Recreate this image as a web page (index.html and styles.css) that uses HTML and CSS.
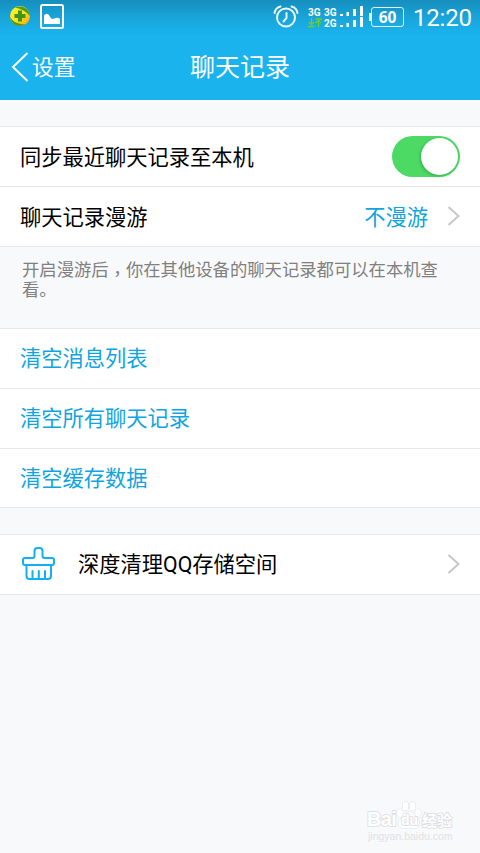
FILE: index.html
```html
<!DOCTYPE html>
<html lang="zh-CN">
<head>
<meta charset="utf-8">
<title>聊天记录</title>
<link rel="stylesheet" href="styles.css">
</head>
<body>
<header class="top">
  <div class="status">
    <svg class="app" width="22" height="22" viewBox="0 0 22 22">
      <defs><linearGradient id="gold" x1="0" y1="0" x2="1" y2="1"><stop offset="0" stop-color="#fff32a"/><stop offset=".5" stop-color="#ffe51d"/><stop offset="1" stop-color="#f79c08"/></linearGradient></defs>
      <circle cx="11" cy="11" r="10" fill="url(#gold)"/>
      <path d="M6 2.500C12 0 18 2 20.500 8l.3 3C17 6 12 4 6 2.500ZM1.200 12C4 17 9 19 16 19.500C10 23 2 20 1.200 12Z" fill="#4d9b20"/>
      <path d="M9 5.500h4V9h3.500v4H13v3.500H9V13H5.500V9H9z" fill="#439322"/>
    </svg>
    <svg class="photo" width="24" height="25" viewBox="0 0 24 25">
      <rect x="1" y="1" width="22" height="23" rx="1.500" fill="none" stroke="#fff" stroke-width="2"/>
      <path d="M4 20v-8.500C6 9 8 9.500 9.500 12c1.500 2.500 2.500 3.500 4.500 2.500 2-1 4-1.500 6 .5v5z" fill="#fff"/>
    </svg>
    <svg class="alarm" width="26" height="24" viewBox="0 0 26 24" fill="none" stroke="#eefaff" stroke-width="2" stroke-linecap="round">
      <circle cx="13" cy="12.500" r="9"/><path d="M13.500 8v5l-3 3.500M1.500 8C2 4.500 4 2.500 7.500 1.500M24.500 8C24 4.500 22 2.500 18.500 1.500"/>
    </svg>
    <div class="net">
      <span>3G</span><span>3G</span>
      <svg width="14" height="10" viewBox="0 0 14 10" fill="none" stroke="#69cd2a" stroke-width="1.300"><path d="M3.500 0v6.500M.8 4l2.700 2.700L6.200 4M0 8.500h6.500M10.500 9V2.500M7.800 5l2.700-2.700L13.200 5M7.300 1h6.500"/></svg><span>2G</span>
    </div>
    <svg class="signal" width="24" height="22" viewBox="0 0 24 22" fill="#fff">
      <path d="M0 8h3v2H0zM6.500 6h2.500v4H6.500zM13 3h3v7h-3zM20 0h3v10h-3zM0 19h3v2H0zM6.500 17h2.500v4H6.500zM13 14h3v7h-3zM20 11h3v10h-3z"/>
    </svg>
    <div class="battery">60</div>
    <div class="time">12:20</div>
  </div>
  <nav class="nav">
    <svg width="18" height="30" viewBox="0 0 18 30" fill="none" stroke="#fff" stroke-width="2"><path d="M16.500 1L2 15l14.500 14"/></svg>
    <span class="back">设置</span>
    <h1>聊天记录</h1>
  </nav>
</header>
<main>
  <section class="group">
    <div class="row"><span class="label">同步最近聊天记录至本机</span><span class="switch"></span></div>
    <div class="row"><span class="label">聊天记录漫游</span><span class="label value">不漫游</span><svg class="chev" width="13" height="20" viewBox="0 0 13 20"><path d="M1.500 1l10 9-10 9"/></svg></div>
  </section>
  <p class="note">开启漫游后<span class="comma" lang="zh-TW">，</span>你在其他设备的聊天记录都可以在本机查看。</p>
  <section class="group links">
    <div class="row"><span class="label">清空消息列表</span></div>
    <div class="row"><span class="label">清空所有聊天记录</span></div>
    <div class="row"><span class="label">清空缓存数据</span></div>
  </section>
  <section class="group clean">
    <div class="row">
      <svg class="brush" width="34" height="34" viewBox="0 0 34 34" fill="none" stroke="#12b0f2" stroke-width="2" stroke-linejoin="round" stroke-linecap="round"><path d="M3 18a2 2 0 0 1-2-2v-3a2 2 0 0 1 2-2h7.500a2 2 0 0 0 2-2V4a3 3 0 0 1 3-3h2a3 3 0 0 1 3 3v5a2 2 0 0 0 2 2H30a2 2 0 0 1 2 2v3a2 2 0 0 1-2 2zM4.500 18v11a3 3 0 0 0 3 3h18.500a3 3 0 0 0 3-3V18M10.500 24v7.500M16.800 24v7.500M23 24v7.500"/></svg>
      <span class="label">深度清理<span class="latin">QQ</span>存储空间</span>
      <svg class="chev" width="13" height="20" viewBox="0 0 13 20"><path d="M1.500 1l10 9-10 9"/></svg>
    </div>
  </section>
</main>
<footer class="mark">
  <div class="brand"><span class="bai">Bai</span>
    <span class="paw"><svg width="26" height="28" viewBox="0 0 26 28"><ellipse cx="4" cy="12" rx="3" ry="4"/><ellipse cx="9.500" cy="5" rx="3" ry="4.500"/><ellipse cx="16.500" cy="5" rx="3" ry="4.500"/><ellipse cx="22" cy="12" rx="3" ry="4"/><path d="M13 11c4 0 5 3 8 6 4 4 2 10-2 10H7c-5 0-6-6-2-10 3-3 4-6 8-6z"/></svg><b>du</b></span>
    <span class="jy">经验</span></div>
  <div class="url">jingyan.baidu.com</div>
</footer>
</body>
</html>
```
FILE: styles.css
```css
* { box-sizing: border-box; }
body {
  margin: 0;
  height: 853px;
  display: flex;
  flex-direction: column;
  background: #f8f9fb;
  color: #000;
  font-family: "Noto Sans CJK SC", sans-serif;
  font-size: 21.250px;
  overflow: hidden;
}
svg { display: block; flex: none; }
.top {
  height: 100px;
  flex: none;
  color: #fff;
  background: linear-gradient(#158ebd 0, #19a5da 18px, #1ab3ee 35px, #1ab3ee 100%);
}
.status { height: 34px; display: flex; align-items: flex-start; padding-left: 9px; }
.app { margin-top: 5px; }
.photo { margin: 4px 0 0 9px; }
.alarm { margin: 5px 0 0 209px; }
.net {
  display: grid;
  grid-template-columns: 14px 13px;
  column-gap: 2px;
  grid-template-rows: 11px 11px;
  align-items: center;
  margin: 6px 0 0 9px;
  font: bold 10px/11px Roboto, sans-serif;
}
.net span { transform: scaleY(1.15); }
.signal { margin: 6px 0 0 3px; }
.battery {
  position: relative;
  width: 33px;
  height: 20px;
  margin: 7px 0 0 7px;
  border: 1.500px solid #e1f5fc;
  border-radius: 3px;
  font: bold 15.500px/18px "Noto Sans", sans-serif;
  text-align: center;
}
.battery::before { content: ""; position: absolute; left: -3px; top: 5px; width: 2px; height: 8px; background: #e1f5fc; }
.time { margin: 3px 0 0 9px; font: 24px/30px Roboto, sans-serif; letter-spacing: -.2px; white-space: nowrap; }
.nav { height: 66px; display: grid; grid-template-columns: 18px 150px 1fr; align-items: center; padding-left: 11px; }
.back { padding: 0 0 2px 3px; font-size: 21.700px; line-height: 30px; }
h1 { margin: 0 0 0 11px; padding-bottom: 4px; font-size: 25px; font-weight: 400; line-height: 34px; }
main { padding-top: 26px; flex: 1; }
.group { background: #fff; border-top: 1px solid #e6e7e9; }
.row { height: 60px; display: flex; align-items: center; padding: 0 20px; border-bottom: 1px solid #e6e7e9; white-space: nowrap; }
.label { padding-bottom: 2px; line-height: 32px; }
.switch { width: 68px; height: 41px; margin-left: auto; border-radius: 21px; background: #4cd964; display: flex; align-items: center; justify-content: flex-end; padding-right: 2px; }
.switch::after { content: ""; width: 37px; height: 37px; border-radius: 50%; background: #fff; box-shadow: -1px 1px 3px rgba(0,80,10,.3); }
.value { margin-left: auto; margin-right: 19px; color: #0fa5e0; }
.chev { fill: none; stroke: #c7c7cc; stroke-width: 2; position: relative; top: -1px; }
.note { height: 81px; margin: 0; padding: 12px 22px 0 22px; font-size: 17.330px; line-height: 20px; color: #808080; word-break: break-all; width: 468px; }
.comma { font-family: "Noto Sans CJK TC", sans-serif; position: relative; top: 4px; }
.links { color: #0fa5e0; }
.links .label { padding-bottom: 4px; }
.links .row:last-child { height: 59px; }
.links .row:last-child .label { padding-bottom: 2px; }
.clean { margin-top: 26px; }
.clean .label { padding-bottom: 1px; }
.brush { margin: 0 22px 1px 2px; }
.latin { font-family: Roboto, sans-serif; }
.clean .chev { margin-left: auto; }
.mark { width: 92px; height: 53px; margin-left: 367px; color: #fff; }
.brand { height: 29px; display: flex; align-items: flex-end; -webkit-text-stroke: 1.600px #dcdddf; paint-order: stroke fill; }
.bai { font: bold 20px/19px "Liberation Sans", sans-serif; width: 29px; letter-spacing: -.6px; }
.paw { position: relative; width: 26px; height: 28px; flex: none; }
.paw svg { fill: #fff; stroke: #dcdddf; stroke-width: 1; }
.paw b { position: absolute; left: 5px; top: 12px; font: bold 14px/14px "Liberation Sans", sans-serif; }
.jy { font-size: 15px; font-weight: 700; line-height: 19px; }
.url { margin-left: 1px; font: 10.500px/14px "Liberation Sans", sans-serif; color: #e1e2e4; white-space: nowrap; }
```
